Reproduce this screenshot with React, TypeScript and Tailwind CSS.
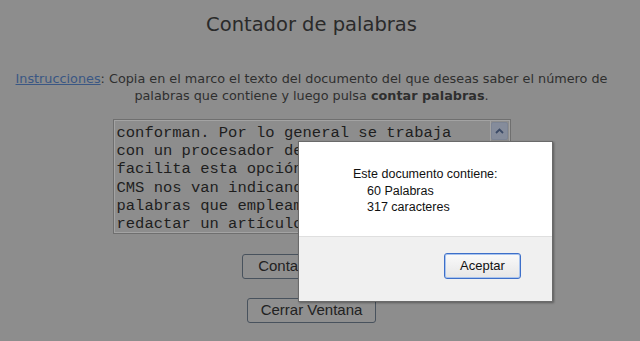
import React from 'react';

const lines = [
  'conforman. Por lo general se trabaja',
  'con un procesador de textos que nos',
  'facilita esta opción, pero no todos',
  'CMS nos van indicando el número de',
  'palabras que empleamos al momento de',
  'redactar un artículo para la web.',
];

function ScrollUp() {
  return (
    <div className="w-[17px] h-[18px] rounded-[2px] bg-[#858c9b] border border-[#7c8494] flex items-center justify-center">
      <svg width="9" height="6" viewBox="0 0 9 6">
        <path d="M1 5 L4.5 1.5 L8 5" fill="none" stroke="#3b4a66" strokeWidth="1.8" />
      </svg>
    </div>
  );
}

export default function App() {
  return (
    <div className="relative w-[640px] h-[341px] overflow-hidden bg-[#8d8d8d] text-[#2f2f2f]">
      {/* page behind the alert (dimmed) */}
      <div className="w-[623px] flex flex-col items-center">
        <h1 className="mt-[12px] text-[19.5px] leading-[26px] font-['DejaVu_Sans',sans-serif] text-[#2a2a2a]">
          Contador de palabras
        </h1>

        <p className="mt-[32px] text-center text-[12.8px] leading-[17px] font-['DejaVu_Sans',sans-serif]">
          <span className="text-[#3a5784] underline">Instrucciones</span>: Copia en el marco el texto del documento del que deseas saber el número de
          <br />
          palabras que contiene y luego pulsa <b className="font-bold">contar palabras</b>.
        </p>

        {/* textarea look-alike */}
        <div className="mt-[15px] w-[398px] h-[115px] border border-[#6f6f6f] flex">
          <div className="flex-1 border border-[#a3a3a3] pl-[2px] pt-[3px] font-['Liberation_Mono',monospace] text-[15.5px] leading-[18.2px] text-[#1e1e1e] overflow-hidden">
            {lines.map((l) => (
              <div key={l} className="whitespace-pre">{l}</div>
            ))}
          </div>
          <div className="w-[19px] pt-[1px] pr-[2px] border-y border-r border-[#a3a3a3]">
            <ScrollUp />
          </div>
        </div>

        <button className="mt-[20px] w-[140px] h-[25px] rounded-[3px] border border-[#48525d] bg-[#8f8f8f] text-[15px] font-['Liberation_Sans',sans-serif] text-[#222]">
          Contar palabras
        </button>
        <button className="mt-[19px] w-[129px] h-[25px] rounded-[3px] border border-[#48525d] bg-[#8f8f8f] text-[15px] font-['Liberation_Sans',sans-serif] text-[#222]">
          Cerrar Ventana
        </button>
      </div>

      {/* alert dialog */}
      <div className="absolute left-[298px] top-[141px] w-[255px] h-[161px] border border-[#6a6a6a] shadow-[1px_1px_2px_rgba(0,0,0,0.35)] flex flex-col font-['Liberation_Sans',sans-serif] text-[12.5px] text-[#111]">
        <div className="h-[95px] bg-white border-b border-[#dfdfdf] pl-[54px] pt-[24px] leading-[16.5px]">
          <div>Este documento contiene:</div>
          <div className="pl-[14px]">60 Palabras</div>
          <div className="pl-[14px]">317 caracteres</div>
        </div>
        <div className="flex-1 bg-[#f0f0f0] flex justify-end items-start pr-[31px] pt-[16px]">
          <button className="w-[77px] h-[26px] rounded-[3px] border border-[#3d6fc9] bg-gradient-to-b from-[#fafafa] to-[#e6e6e6] shadow-[inset_0_0_0_1px_#a9c4ee] text-[13px] text-[#111]">
            Aceptar
          </button>
        </div>
      </div>
    </div>
  );
}
